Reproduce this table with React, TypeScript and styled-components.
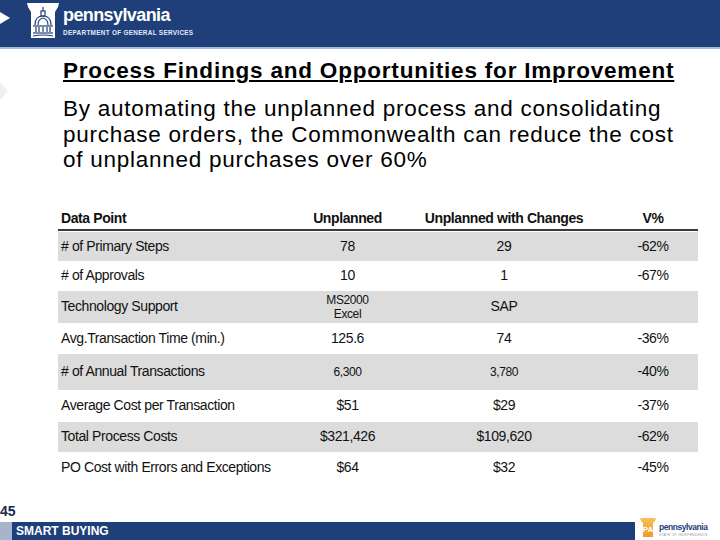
import React from "react";
import styled, { createGlobalStyle } from "styled-components";

const Global = createGlobalStyle`
  html, body { margin: 0; padding: 0; background: #ffffff; }
  body { font-family: "Liberation Sans", Arial, sans-serif; color: #000; }
`;

const Page = styled.div`
  width: 720px;
  height: 540px;
  position: relative;
  overflow: hidden;
  display: flex;
  flex-direction: column;
  background: #fff;
`;

const Header = styled.header`
  height: 47px;
  background: #1f3f7b;
  border-bottom: 2px solid #a7bddc;
  display: flex;
  align-items: flex-start;
  flex-shrink: 0;
`;

const HeaderArrow = styled.div`
  width: 0;
  height: 0;
  margin-top: 12px;
  border-top: 6px solid transparent;
  border-bottom: 6px solid transparent;
  border-left: 10px solid #ffffff;
`;

const Keystone = styled.svg`
  margin-left: 17px;
  margin-top: 3px;
  flex-shrink: 0;
`;

const Brand = styled.div`
  display: flex;
  flex-direction: column;
  margin-left: 4px;
  margin-top: 5px;
`;

const BrandName = styled.div`
  font-family: "Liberation Sans", Arial, sans-serif;
  font-weight: 700;
  font-size: 18px;
  letter-spacing: -0.6px;
  color: #ffffff;
  line-height: 21px;
`;

const BrandSub = styled.div`
  font-family: "Liberation Sans", Arial, sans-serif;
  font-size: 6.4px;
  font-weight: 700;
  color: #e4ebf5;
  letter-spacing: 0.3px;
  margin-top: 3px;
`;

const SideMark = styled.div`
  position: absolute;
  left: 0;
  top: 82px;
  width: 0;
  height: 0;
  border-top: 9px solid transparent;
  border-bottom: 9px solid transparent;
  border-left: 8px solid #efefef;
`;

const Content = styled.main`
  flex: 1;
  display: flex;
  flex-direction: column;
  padding: 9px 10px 0 63px;
`;

const Title = styled.h1`
  margin: 0;
  font-size: 22.5px;
  font-weight: 700;
  letter-spacing: 0.8px;
  text-decoration: underline;
  text-decoration-thickness: 1.5px;
  text-underline-offset: 2px;
  line-height: 25px;
  white-space: nowrap;
`;

const Lead = styled.p`
  margin: 13px 0 0 0;
  font-size: 22.5px;
  letter-spacing: 0.74px;
  line-height: 25.5px;
  white-space: nowrap;
`;

const TableWrap = styled.div`
  margin: 35px 0 0 -5px;
`;

const Table = styled.table`
  border-collapse: collapse;
  width: 640px;
  font-family: "Liberation Sans", Arial, sans-serif;
  font-size: 14px;
  letter-spacing: -0.4px;
  color: #111;
  table-layout: fixed;
`;

const HeadCell = styled.th<{ $align?: string }>`
  font-weight: 700;
  text-align: ${(p) => p.$align || "center"};
  padding: 0 3px;
  height: 21px;
  border-bottom: 2px solid #3a3a3a;
  vertical-align: middle;
  white-space: nowrap;
`;

const Row = styled.tr<{ $shade: boolean; $h: number }>`
  background: ${(p) => (p.$shade ? "#dcdcdc" : "#ffffff")};
  height: ${(p) => p.$h}px;
`;

const Cell = styled.td<{ $align?: string; $small?: boolean }>`
  text-align: ${(p) => p.$align || "center"};
  padding: 0 3px;
  vertical-align: middle;
  white-space: nowrap;
  font-size: ${(p) => (p.$small ? "12px" : "14px")};
  line-height: ${(p) => (p.$small ? "14px" : "17px")};
`;

const Spacer = styled.tr`
  height: 2px;
`;

const PageNum = styled.div`
  position: absolute;
  left: 0;
  top: 503px;
  font-weight: 700;
  font-size: 14px;
  color: #1a2b4a;
`;

const Footer = styled.footer`
  height: 18px;
  display: flex;
  align-items: stretch;
  flex-shrink: 0;
`;

const FooterTab = styled.div`
  width: 12px;
  background: #a6b4cc;
`;

const FooterBar = styled.div`
  width: 623px;
  background: #1f3f7b;
  color: #fff;
  font-weight: 700;
  font-size: 12px;
  display: flex;
  align-items: center;
  padding-left: 4px;
  box-sizing: border-box;
`;

const FooterLogo = styled.div`
  flex: 1;
  display: flex;
  align-items: flex-start;
  padding-left: 5px;
  gap: 3px;
  margin-top: -4px;
`;

const PaMark = styled.svg`
  flex-shrink: 0;
`;

const PaText = styled.div`
  display: flex;
  flex-direction: column;
  padding-top: 4px;
`;

const PaName = styled.div`
  font-size: 8.5px;
  font-weight: 700;
  color: #1f3f7b;
  line-height: 10px;
  letter-spacing: -0.45px;
`;

const PaTag = styled.div`
  font-size: 3.2px;
  color: #8a93a3;
  letter-spacing: 0.35px;
  margin-top: 1px;
  white-space: nowrap;
`;

const rows: { label: string; a: React.ReactNode; b: string; v: string; h: number; smallA?: boolean; smallB?: boolean }[] = [
  { label: "# of Primary Steps", a: "78", b: "29", v: "-62%", h: 29 },
  { label: "# of Approvals", a: "10", b: "1", v: "-67%", h: 30 },
  {
    label: "Technology Support",
    a: (
      <>
        MS2000
        <br />
        Excel
      </>
    ),
    b: "SAP",
    v: "",
    h: 32,
    smallA: true,
  },
  { label: "Avg.Transaction Time (min.)", a: "125.6", b: "74", v: "-36%", h: 31 },
  { label: "# of Annual Transactions", a: "6,300", b: "3,780", v: "-40%", h: 36, smallA: true, smallB: true },
  { label: "Average Cost per Transaction", a: "$51", b: "$29", v: "-37%", h: 32 },
  { label: "Total Process Costs", a: "$321,426", b: "$109,620", v: "-62%", h: 30 },
  { label: "PO Cost with Errors and Exceptions", a: "$64", b: "$32", v: "-45%", h: 32 },
];

export default function App() {
  return (
    <>
      <Global />
      <Page>
        <Header>
          <HeaderArrow />
          <Keystone width="32" height="36" viewBox="0 0 32 36">
            <polygon points="0,0 32,0 31,4 28,9 28,35 4,35 4,9 1,4" fill="#ffffff" />
            <g stroke="#1f3f7b" fill="none" strokeWidth="1.2">
              <line x1="16" y1="4" x2="16" y2="8" />
              <rect x="14" y="8" width="4" height="5" />
              <path d="M8 22 Q8 13 16 13 Q24 13 24 22" />
              <path d="M11 22 Q11 16 16 15" />
              <path d="M21 22 Q21 16 16 15" />
              <line x1="6" y1="23" x2="26" y2="23" />
              <line x1="9" y1="24" x2="9" y2="29" />
              <line x1="12" y1="24" x2="12" y2="29" />
              <line x1="16" y1="24" x2="16" y2="29" />
              <line x1="20" y1="24" x2="20" y2="29" />
              <line x1="23" y1="24" x2="23" y2="29" />
              <line x1="6" y1="30" x2="26" y2="30" />
              <path d="M6 33 Q16 31 26 33" />
            </g>
          </Keystone>
          <Brand>
            <BrandName>pennsylvania</BrandName>
            <BrandSub>DEPARTMENT OF GENERAL SERVICES</BrandSub>
          </Brand>
        </Header>
        <SideMark />
        <Content>
          <Title>Process Findings and Opportunities for Improvement</Title>
          <Lead>
            By automating the unplanned process and consolidating
            <br />
            purchase orders, the Commonwealth can reduce the cost
            <br />
            of unplanned purchases over 60%
          </Lead>
          <TableWrap>
            <Table>
              <colgroup>
                <col style={{ width: 237 }} />
                <col style={{ width: 105 }} />
                <col style={{ width: 208 }} />
                <col style={{ width: 90 }} />
              </colgroup>
              <thead>
                <tr>
                  <HeadCell $align="left">Data Point</HeadCell>
                  <HeadCell>Unplanned</HeadCell>
                  <HeadCell>Unplanned with Changes</HeadCell>
                  <HeadCell>V%</HeadCell>
                </tr>
              </thead>
              <tbody>
                <Spacer />
                {rows.map((r, i) => (
                  <Row key={r.label} $shade={i % 2 === 0} $h={r.h}>
                    <Cell $align="left">{r.label}</Cell>
                    <Cell $small={r.smallA}>{r.a}</Cell>
                    <Cell $small={r.smallB}>{r.b}</Cell>
                    <Cell>{r.v}</Cell>
                  </Row>
                ))}
              </tbody>
            </Table>
          </TableWrap>
        </Content>
        <PageNum>45</PageNum>
        <Footer>
          <FooterTab />
          <FooterBar>SMART BUYING</FooterBar>
          <FooterLogo>
            <PaMark width="16" height="19" viewBox="0 0 16 19">
              <defs>
                <linearGradient id="pag" x1="0" y1="0" x2="0" y2="1">
                  <stop offset="0" stopColor="#f7c25a" />
                  <stop offset="1" stopColor="#ee9a2a" />
                </linearGradient>
              </defs>
              <polygon points="0,0 16,0 15,3 13,5 13,19 3,19 3,5 1,3" fill="url(#pag)" />
              <text x="8" y="14" textAnchor="middle" fontFamily="Liberation Sans, Arial, sans-serif" fontWeight="700" fontSize="8" fill="#ffffff">PA</text>
            </PaMark>
            <PaText>
              <PaName>pennsylvania</PaName>
              <PaTag>STATE OF INDEPENDENCE</PaTag>
            </PaText>
          </FooterLogo>
        </Footer>
      </Page>
    </>
  );
}
